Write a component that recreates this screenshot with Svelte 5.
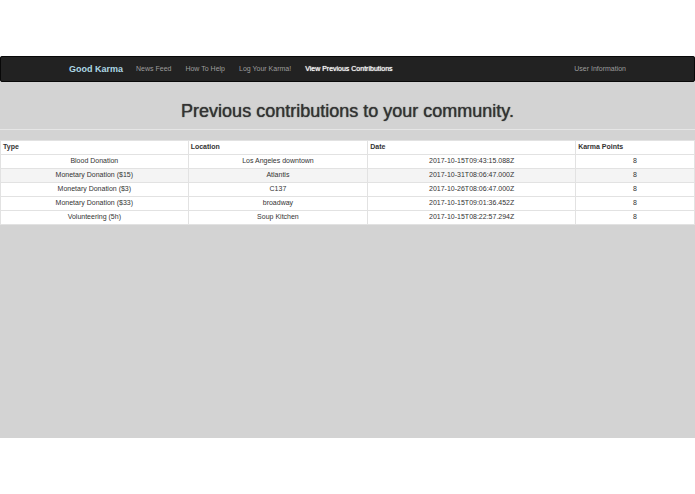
<script>
  const links = ['News Feed', 'How To Help', 'Log Your Karma!', 'View Previous Contributions'];
  const current = 'View Previous Contributions';
  const columns = ['Type', 'Location', 'Date', 'Karma Points'];
  const rows = [
    ['Blood Donation', 'Los Angeles downtown', '2017-10-15T09:43:15.088Z', 8],
    ['Monetary Donation ($15)', 'Atlantis', '2017-10-31T08:06:47.000Z', 8],
    ['Monetary Donation ($3)', 'C137', '2017-10-26T08:06:47.000Z', 8],
    ['Monetary Donation ($33)', 'broadway', '2017-10-15T09:01:36.452Z', 8],
    ['Volunteering (5h)', 'Soup Kitchen', '2017-10-15T08:22:57.294Z', 8]
  ];
</script>

<div class="page">
  <nav>
    <a class="brand" href="#home">Good Karma</a>
    <ul>
      {#each links as link}
        <li><a href="#page" class:active={link === current}>{link}</a></li>
      {/each}
    </ul>
    <a class="user" href="#user">User Information</a>
  </nav>

  <main>
    <h1>Previous contributions to your community.</h1>
    <hr />
    <table>
      <thead>
        <tr>
          {#each columns as column}
            <th scope="col">{column}</th>
          {/each}
        </tr>
      </thead>
      <tbody>
        {#each rows as row}
          <tr>
            {#each row as cell}
              <td>{cell}</td>
            {/each}
          </tr>
        {/each}
      </tbody>
    </table>
  </main>
</div>

<style>
  :global(body) {
    margin: 0;
    background: #fff;
  }

  .page {
    box-sizing: border-box;
    min-height: calc(100vh - 112px);
    margin: 56px 0;
    background: #d3d3d3;
    color: #333;
    font-family: 'Liberation Sans', Arial, sans-serif;
    font-size: 7px;
    line-height: 10px;
    display: flow-root;
  }

  nav {
    display: flex;
    align-items: center;
    padding: 7px 68px;
    border: 1px solid #080808;
    border-radius: 2px;
    background: #222;
  }

  a {
    color: #9d9d9d;
    text-decoration: none;
  }

  .brand {
    color: #add8e6;
    font-size: 9px;
    font-weight: bold;
  }

  ul {
    display: flex;
    gap: 14px;
    margin: 0 0 0 13px;
    padding: 0;
    list-style: none;
  }

  .active {
    color: #fff;
    text-shadow: 0 0 1px #fff;
  }

  .user {
    margin-left: auto;
  }

  h1 {
    margin: 19px 0 8px;
    font-size: 18px;
    font-weight: 500;
    line-height: 20px;
    text-align: center;
    text-shadow: 0 0 1px #333;
  }

  hr {
    margin: 0 0 10px;
    border: 0;
    border-top: 1px solid #e6e6e6;
  }

  table {
    width: 100%;
    table-layout: fixed;
    border-collapse: collapse;
    background: #fff;
  }

  th,
  td {
    padding: 1px 2px 2px;
    border: 1px solid #e2e2e2;
    text-align: center;
  }

  th {
    text-align: left;
  }

  th:nth-child(1) {
    width: 27.1%;
  }

  th:nth-child(2) {
    width: 25.9%;
  }

  th:nth-child(3) {
    width: 30.1%;
  }

  th:nth-child(4) {
    width: 16.9%;
  }

  tbody tr:nth-child(2) {
    background: #f4f4f4;
  }
</style>
